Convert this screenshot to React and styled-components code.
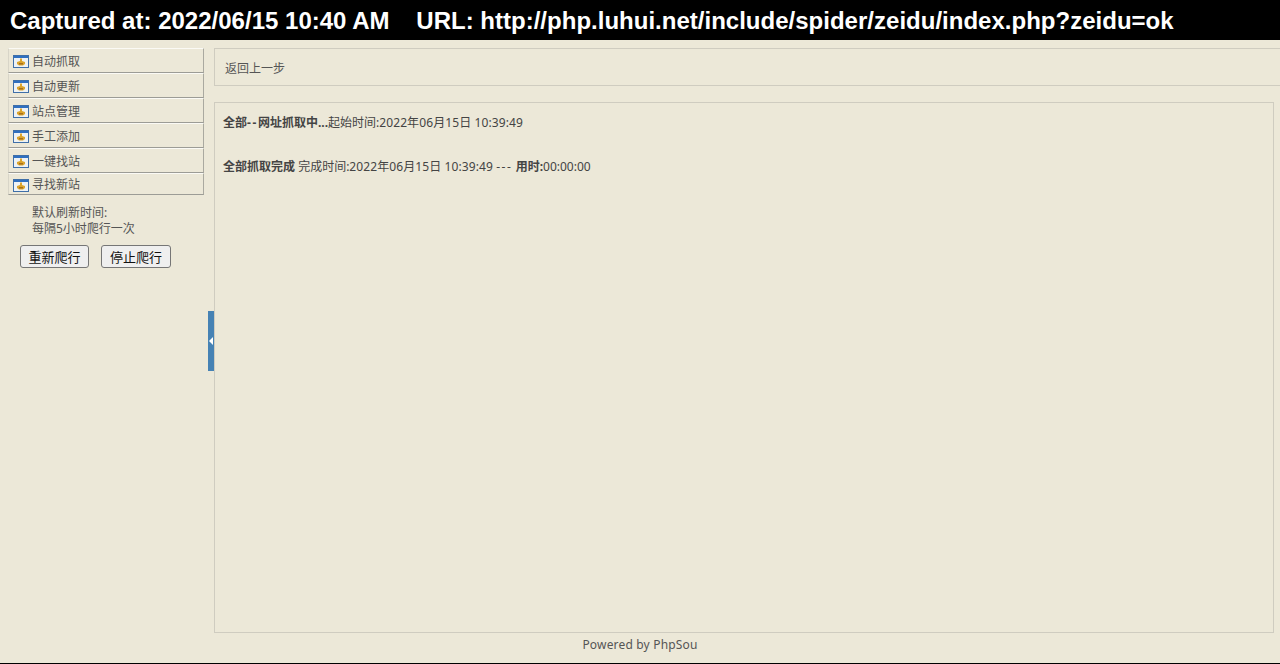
import React from 'react';
import styled, { createGlobalStyle } from 'styled-components';

const GlobalStyle = createGlobalStyle`
  html, body {
    margin: 0;
    padding: 0;
    height: 664px;
    overflow: hidden;
    background: #ece8d8;
  }
  body {
    font-family: "Noto Sans", "Noto Sans CJK SC", sans-serif;
    font-size: 12px;
    color: #444;
  }
`;

const Page = styled.div`
  position: relative;
  display: flex;
  flex-direction: column;
  width: 1280px;
  height: 664px;
  border-bottom: 1px solid #000;
  box-sizing: border-box;
  overflow: hidden;
`;

const CaptureBar = styled.div`
  flex: none;
  height: 40px;
  padding-left: 10px;
  background: #000;
  color: #fff;
  font: bold 24px/41px "Liberation Sans", Arial, sans-serif;
  letter-spacing: 0.01px;
  white-space: pre;
`;

const Body = styled.div`
  flex: 1;
  display: flex;
  min-height: 0;
`;

const Sidebar = styled.div`
  flex: none;
  width: 196px;
  margin: 8px 10px 0 8px;
`;

const MenuItem = styled.div`
  display: flex;
  align-items: center;
  gap: 3px;
  box-sizing: border-box;
  height: ${props => (props.$short ? '22px' : '25px')};
  padding: 2px 0 0 4px;
  border-top: 1px solid #fbfaf5;
  border-bottom: 1px solid #9c9c96;
  border-left: 1px solid #d8d5c8;
  border-right: 1px solid #aaa9a0;
  color: #555;
  line-height: 1;
`;

const Note = styled.div`
  margin: 10px 0 0 24px;
  color: #555;
  line-height: 16px;
`;

const Buttons = styled.div`
  display: flex;
  gap: 12px;
  margin: 8px 0 0 12px;
`;

const Button = styled.button`
  width: ${props => props.$width};
  height: 23px;
  padding: 0;
  border: 1px solid #767676;
  border-radius: 3px;
  background: #efefef;
  color: #111;
  font: 13px/1 "Noto Sans CJK SC", sans-serif;
`;

const Toggle = styled.div`
  position: absolute;
  left: 208px;
  top: 311px;
  display: flex;
  align-items: center;
  width: 6px;
  height: 60px;
  background: #4682b4;
`;

const ToggleArrow = styled.span`
  width: 0;
  height: 0;
  margin-left: 1px;
  border-top: 4px solid transparent;
  border-bottom: 4px solid transparent;
  border-right: 4px solid #fff;
`;

const Main = styled.div`
  flex: 1;
  display: flex;
  flex-direction: column;
  min-width: 0;
  padding-top: 8px;
`;

const BackBar = styled.div`
  box-sizing: border-box;
  width: 1080px;
  height: 38px;
  padding-left: 10px;
  border: 1px solid #cfccc0;
  line-height: 39px;
  color: #555;
`;

const Panel = styled.div`
  box-sizing: border-box;
  width: 1060px;
  height: 531px;
  margin-top: 16px;
  padding: 12px 8px;
  border: 1px solid #cfccc0;
`;

const LogLine = styled.div`
  height: 16px;
  line-height: 16px;
  margin-bottom: ${props => (props.$gap ? '28px' : '0')};
  white-space: pre;
`;

const Dashes = styled.span`
  letter-spacing: 1.6px;
`;

const Stamp = styled.span`
  letter-spacing: 0.1px;
`;

const Footer = styled.div`
  width: 1280px;
  margin-left: -214px;
  padding-top: 3px;
  text-align: center;
  line-height: 17px;
  letter-spacing: 0.18px;
  color: #555;
`;

const menuItems = ['自动抓取', '自动更新', '站点管理', '手工添加', '一键找站', '寻找新站'];

const MenuIcon = () => (
  <svg width="16" height="13" viewBox="0 0 16 13">
    <rect x="0.5" y="0.5" width="15" height="12" fill="#eef2f4" stroke="#3f6fa8" />
    <rect x="1" y="1" width="14" height="2" fill="#2f6fc0" />
    <path d="M7 3.5H9V6L12 7V9L10 10.5H6L4 9V7L7 6Z" fill="#dca42c" />
    <path d="M6 8H10V9.5H6Z" fill="#a8701a" />
  </svg>
);

const App = () => (
  <>
    <GlobalStyle />
    <Page>
      <CaptureBar>Captured at: 2022/06/15 10:40 AM    URL: http://php.luhui.net/include/spider/zeidu/index.php?zeidu=ok</CaptureBar>
      <Body>
        <Sidebar>
          {menuItems.map((item, index) => (
            <MenuItem key={item} $short={index === menuItems.length - 1}>
              <MenuIcon />
              {item}
            </MenuItem>
          ))}
          <Note>
            默认刷新时间:
            <br />
            每隔5小时爬行一次
          </Note>
          <Buttons>
            <Button type="button" $width="69px">重新爬行</Button>
            <Button type="button" $width="70px">停止爬行</Button>
          </Buttons>
        </Sidebar>
        <Main>
          <BackBar>返回上一步</BackBar>
          <Panel>
            <LogLine $gap>
              <b>全部<Dashes>--</Dashes>网址抓取中...</b>起始时间:<Stamp>2022年06月15日 10:39:49</Stamp>
            </LogLine>
            <LogLine>
              <b>全部抓取完成</b> 完成时间:<Stamp>2022年06月15日 10:39:49</Stamp> <Dashes>---</Dashes> <b>用时:</b>00:00:00
            </LogLine>
          </Panel>
          <Footer>Powered by PhpSou</Footer>
        </Main>
      </Body>
      <Toggle>
        <ToggleArrow />
      </Toggle>
    </Page>
  </>
);

export default App;
